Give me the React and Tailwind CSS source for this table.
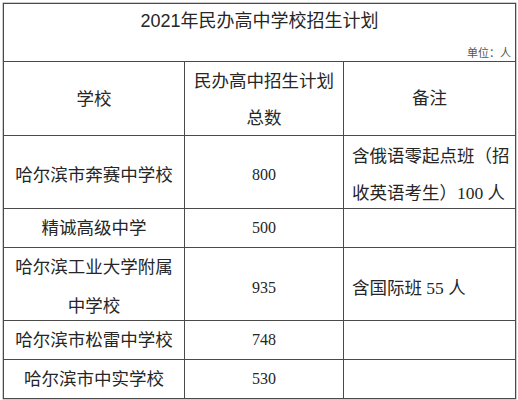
export default function App() {
  const sans = { fontFamily: '"Liberation Sans", "Noto Sans CJK SC", sans-serif' };
  const serif = { fontFamily: '"Liberation Serif", "Noto Sans CJK SC", serif' };
  const row = "grid grid-cols-[181px_159px_171px] border-b border-[#4a4a4a]";
  const cell = "border-r border-[#4a4a4a] flex items-center justify-center text-center";
  const last = "flex items-center";
  return (
    <div className="w-[518px] h-[400px] bg-white overflow-hidden text-[#262626]">
      <div className="ml-[3px] mt-[3px] w-[513px] border border-[#4a4a4a] border-b-0 shadow-[0_0_0_0.5px_#9a9a9a]">
        <div className="h-[58px] border-b border-[#4a4a4a] flex flex-col" style={sans}>
          <div className="text-[18px] leading-[22px] text-center pt-[6px]">2021年民办高中学校招生计划</div>
          <div className="mt-auto pb-[1px] pr-[4px] text-right text-[11px] leading-[14px] text-[#555]" style={serif}>单位：人</div>
        </div>
        <div className={row + " h-[74px]"} style={sans}>
          <div className={cell + " text-[17.5px]"}>学校</div>
          <div className={cell + " flex-col text-[17.5px] leading-[37px] pt-[1px]"}>
            <div>民办高中招生计划</div>
            <div>总数</div>
          </div>
          <div className="flex items-center justify-center text-[17.5px] pb-[2px]">备注</div>
        </div>
        <div className={row + " h-[73px]"} style={serif}>
          <div className={cell + " text-[17.5px] pt-[2px]"}>哈尔滨市奔赛中学校</div>
          <div className={cell + " text-[16px] pt-[2px]"}>800</div>
          <div className={last + " text-[17.5px] leading-[37px] pl-[8px] pt-[2px]"}>
            <div>
              含俄语零起点班（招<br />收英语考生）100 人
            </div>
          </div>
        </div>
        <div className={row + " h-[39px]"} style={serif}>
          <div className={cell + " text-[17.5px]"}>精诚高级中学</div>
          <div className={cell + " text-[16px]"}>500</div>
          <div className={last}></div>
        </div>
        <div className={row + " h-[73px]"} style={serif}>
          <div className={cell + " flex-col text-[17.5px] leading-[39px]"}>
            <div>哈尔滨工业大学附属</div>
            <div>中学校</div>
          </div>
          <div className={cell + " text-[16px] pt-[2px]"}>935</div>
          <div className={last + " text-[17.5px] pl-[8px] pt-[2px]"}>含国际班 55 人</div>
        </div>
        <div className={row + " h-[39px]"} style={serif}>
          <div className={cell + " text-[17.5px]"}>哈尔滨市松雷中学校</div>
          <div className={cell + " text-[16px]"}>748</div>
          <div className={last}></div>
        </div>
        <div className={row + " h-[39px]"} style={serif}>
          <div className={cell + " text-[17.5px]"}>哈尔滨市中实学校</div>
          <div className={cell + " text-[16px]"}>530</div>
          <div className={last}></div>
        </div>
      </div>
    </div>
  );
}
